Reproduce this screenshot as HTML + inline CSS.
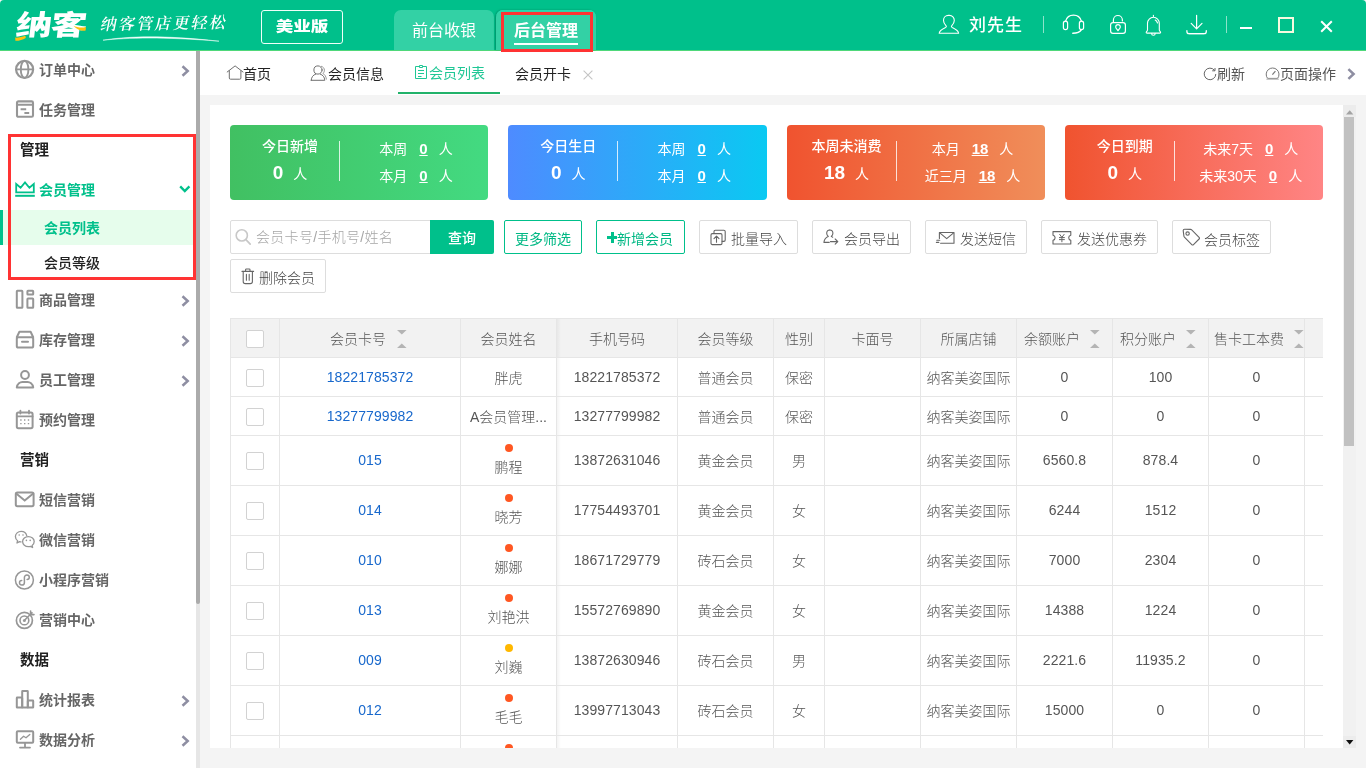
<!DOCTYPE html>
<html lang="zh-CN"><head><meta charset="utf-8"><title>会员列表</title>
<style>
*{box-sizing:border-box;margin:0;padding:0}
html,body{width:1366px;height:768px;overflow:hidden}
body{position:relative;background:#f4f4f4;font-family:"Liberation Sans","Noto Sans CJK SC",sans-serif;font-size:14px;color:#666}
#wrap{position:absolute;left:0;top:0;width:1366px;height:768px;will-change:transform}
.a{position:absolute}
.t{position:absolute;white-space:nowrap;line-height:20px;height:20px}
.c{text-align:center}
svg{position:absolute;overflow:visible}
.ic{fill:none;stroke:#969696;stroke-width:2;stroke-linecap:round;stroke-linejoin:round}
.hi{fill:none;stroke:#fff;stroke-width:1.2;stroke-linecap:round;stroke-linejoin:round}
.ti{fill:none;stroke:#707070;stroke-width:1;stroke-linecap:round;stroke-linejoin:round}
.bi{fill:none;stroke:#666;stroke-width:1.1;stroke-linecap:round;stroke-linejoin:round}
#hd{left:0;top:0;width:1366px;height:50px;background:#00c08b;border-radius:4px 4px 0 0}
#hdl{left:0;top:50px;width:1366px;height:1px;background:#4fd87a}
.logo{font-family:"Liberation Sans","Noto Sans CJK SC",sans-serif;font-weight:900;color:#fff;font-size:28px;line-height:34px;height:34px;letter-spacing:-1px;transform:skewX(-7deg) scaleX(1.29);transform-origin:left bottom;white-space:nowrap}
.slog{font-family:"Liberation Serif","Noto Serif CJK SC","Noto Sans CJK SC",serif;font-weight:600;color:#fff;font-size:16px;letter-spacing:2.1px;transform:skewX(-12deg) rotate(-1deg)}
.ver{left:261px;top:10px;width:82px;height:34px;border:1px solid #effff9;border-radius:3px;color:#fff;font-weight:900;font-size:14px;line-height:31px;text-align:center}
.ver span{display:inline-block;transform:scaleX(1.25)}
.tab{top:10px;height:40px;padding-top:1px;background:#33d1a5;border-radius:7px 7px 0 0;color:#fff;font-size:16px;text-align:center;line-height:40px}
.red{border:3px solid #ff3333;z-index:5}
.mi{position:absolute;left:39px;font-weight:700;color:#666;font-size:14px;line-height:20px;height:20px;white-space:nowrap}
.mh{position:absolute;left:20px;font-weight:700;color:#222;font-size:14.5px;line-height:20px;height:20px;white-space:nowrap}
.ptab{position:absolute;top:64px;height:20px;line-height:20px;font-size:14px;color:#222;white-space:nowrap}
.card{position:absolute;top:125px;width:258.25px;height:75px;border-radius:4px;color:#fff}
.card .t{color:#fff}
.card b{font-weight:700}
.u{text-decoration:underline;font-weight:700;font-size:15px}
.btn{position:absolute;top:220px;height:34px;border:1px solid #ddd;border-radius:2px;background:#fff}
.btn.g{border-color:#00c08b}
.cb{position:absolute;left:246px;width:18px;height:18px;border:1px solid #d2d2d2;border-radius:2px;background:#fff}
.vl{position:absolute;top:319px;width:1px;height:429px;background:#e6e6e6}
.hl{position:absolute;left:230px;width:1093px;height:1px;background:#e6e6e6}
.td{position:absolute;white-space:nowrap;line-height:20px;height:20px;text-align:center;color:#555;font-size:14px;font-weight:300}
.lk{color:#1868cc}
.n{letter-spacing:.1px}
.dot{position:absolute;left:505px;width:8px;height:8px;border-radius:50%;background:#ff5722}
</style></head>
<body>
<div id="wrap">
<div class="a" id="hd"></div><div class="a" id="hdl"></div>
<div class="a logo" style="left:14px;top:9px">纳客</div>
<svg style="left:14px;top:24px" width="76" height="20" viewBox="0 0 76 20"><path d="M1.200 13.600C4.500 13.800 8 13 11.400 11.800L11.800 14C8.500 16 4.500 17 1.400 16.800z" fill="#ffc20e"/><path d="M59.400 1.800C63 3.400 67.500 4.200 72 3L71.600 6.600C67 7.400 63.400 5.600 59.400 1.800z" fill="#ffc20e"/></svg>
<div class="t slog" style="left:101px;top:14px">纳客管店更轻松</div>
<svg style="left:100px;top:34px" width="130" height="10"><path d="M3 6.200C28 2.300 62 .8 119 7.200 62 2.600 28 3.800 3 6.200z" fill="#f2fffa" stroke="#f2fffa" stroke-width=".5" stroke-linejoin="round"/></svg>
<div class="a ver"><span>美业版</span></div>
<div class="a tab" style="left:394px;width:100px">前台收银</div>
<div class="a tab" style="left:496px;width:100px;font-weight:700;box-shadow:-1px 0 2px rgba(0,110,80,.6),inset 0 1px 0 #22dcb0">后台管理</div>
<div class="a" style="left:514px;top:43px;width:64px;height:2px;background:#fff"></div>
<div class="a red" style="left:501px;top:12px;width:92px;height:40px"></div>
<svg style="left:0;top:0" width="1366" height="51" viewBox="0 0 1366 51"><path class="hi" d="M948.400 15.400c-2.900 0-4.900 2.300-4.900 5 0 2.300 1.300 4 2.600 5.400.5.600.3 1.200-.5 1.600-3 1.400-6 2.600-6.400 5.800h19.400c-.4-3.200-3.400-4.400-6.400-5.800-.8-.4-1-1-.5-1.600 1.300-1.400 2.600-3.100 2.600-5.400 0-2.700-2-5-4.900-5z" style="stroke-width:1.1"/><path class="hi" d="M1065.600 21.200a8.200 8.200 0 0 1 15.800 0"/><rect class="hi" x="1063.400" y="21.200" width="4.200" height="8.400" rx="2.100"/><rect class="hi" x="1079.400" y="21.200" width="4.200" height="8.400" rx="2.100"/><path class="hi" d="M1081.400 29.600c-1.400 2.400-4.400 3.600-8.600 3.600" style="stroke-width:1.5"/><rect class="hi" x="1110.600" y="22.600" width="14.800" height="10.800" rx="2.400"/><path class="hi" d="M1113.400 22.400v-2.400a4.500 4.500 0 0 1 9 0v1"/><path class="hi" d="M1118 24.600a2.300 2.300 0 0 1 2.300 2.300c0 1.400-1.400 2.400-2.300 3.800-.9-1.400-2.300-2.400-2.300-3.800a2.300 2.300 0 0 1 2.300-2.300z"/><path class="hi" d="M1153.400 15.200v1.400M1147.500 30v-6.800a5.900 5.900 0 0 1 11.800 0v6.800c0 .9 1 1.500 1.200 2.100.2.600-.2 1-.8 1h-12.600c-.6 0-1-.4-.8-1 .2-.6 1.200-1.200 1.200-2.100zM1151.600 33.400a1.800 1.800 0 0 0 3.600 0M1155.200 20c1.200.7 1.900 1.800 2.300 3" style="stroke-width:1.1"/><path class="hi" d="M1196.600 15.300v13.300M1191.200 23.400l5.400 5.400 5.400-5.400" style="stroke-width:1.2"/><path class="hi" d="M1186.900 30.600v.8c0 1.300.9 2.200 2.200 2.200h15c1.300 0 2.200-.9 2.200-2.200v-.8" style="stroke-width:1.300"/><path d="M1189 33.900h15.200" stroke="rgba(255,255,255,.45)" stroke-width="1.200"/></svg>
<div class="t" style="left:969px;top:13px;font-size:17px;letter-spacing:1px;font-weight:500;color:#fff;line-height:26px;height:26px">刘先生</div>
<div class="a" style="left:1043px;top:16px;width:1px;height:17px;background:rgba(255,255,255,.55)"></div>
<div class="a" style="left:1226px;top:16px;width:1px;height:17px;background:rgba(255,255,255,.55)"></div>
<div class="a" style="left:1240px;top:27px;width:12px;height:2px;background:#fff"></div>
<div class="a" style="left:1278px;top:17px;width:16px;height:16px;border:2px solid #f6fadf"></div>
<svg style="left:1320px;top:20px" width="13" height="13" viewBox="0 0 13 13"><path d="M1.200 1.200l10.600 10.600M11.800 1.200L1.200 11.800" stroke="#fff" stroke-width="2" fill="none"/></svg>
<div class="a" style="left:0;top:51px;width:196px;height:717px;background:#fff"></div>
<div class="a" style="left:196px;top:51px;width:4px;height:717px;background:#e6e6e6"></div>
<div class="a" style="left:196px;top:51px;width:4px;height:553px;background:#ababab;border-radius:0 0 2px 2px"></div>
<div class="a" style="left:0;top:210px;width:196px;height:35px;background:#e6fdec"></div>
<div class="a" style="left:0;top:210px;width:3px;height:35px;background:#00c08b"></div>
<svg style="left:14px;top:59px" width="22" height="22" viewBox="0 0 22 22"><circle class="ic" cx="10.600" cy="10.400" r="8.500" style="stroke-width:2.2"/><ellipse class="ic" cx="10.600" cy="10.400" rx="3.800" ry="8.500" style="stroke-width:1.9"/><path class="ic" d="M2.200 10.400h16.800" style="stroke-width:1.900"/></svg><div class="mi" style="top:60px">订单中心</div>
<svg style="left:181px;top:65px" width="9" height="12" viewBox="0 0 9 12"><path d="M1.500 1.300L6.700 6 1.500 10.700" fill="none" stroke="#8e8ea2" stroke-width="2.500"/></svg>
<svg style="left:14px;top:99px" width="22" height="22" viewBox="0 0 22 22"><rect class="ic" x="3" y="2.400" width="16" height="15.400" rx="1.400" style="stroke-width:2.1"/><path class="ic" d="M3 5.800h16M6.600 10.200h5.600M10.400 14h4.800" style="stroke-width:1.900;stroke-linecap:butt"/></svg><div class="mi" style="top:100px">任务管理</div>
<div class="mh" style="top:140px">管理</div>
<svg style="left:14px;top:179px" width="22" height="22" viewBox="0 0 22 22"><path d="M2.200 13.400V5l4.400 3.800L11 3.400l4.400 5.400L19.800 5v8.400z" fill="none" stroke="#00c08b" stroke-width="1.800" stroke-linejoin="miter"/><path d="M1.200 16.800h19.600" stroke="#00c08b" stroke-width="2" fill="none"/></svg><div class="mi" style="top:180px;color:#00c08b">会员管理</div>
<svg style="left:179px;top:185px" width="12" height="9" viewBox="0 0 12 9"><path d="M1.200 1.400L5.800 6 10.400 1.400" fill="none" stroke="#00c08b" stroke-width="2.400"/></svg>
<div class="mi" style="left:44px;top:218px;color:#00c08b">会员列表</div>
<div class="mi" style="left:44px;top:253px;color:#222;font-weight:500">会员等级</div>
<svg style="left:14px;top:289px" width="22" height="22" viewBox="0 0 22 22"><rect class="ic" x="2.800" y="1.800" width="5.600" height="17" rx=".6"/><rect class="ic" x="13.400" y="1.800" width="5.800" height="3.800" rx=".6"/><rect class="ic" x="13.400" y="9.600" width="5.800" height="9.200" rx=".6"/></svg><div class="mi" style="top:290px">商品管理</div>
<svg style="left:181px;top:295px" width="9" height="12" viewBox="0 0 9 12"><path d="M1.500 1.300L6.700 6 1.500 10.700" fill="none" stroke="#8e8ea2" stroke-width="2.500"/></svg>
<svg style="left:14px;top:329px" width="22" height="22" viewBox="0 0 22 22"><path class="ic" d="M2.800 8.200l2.600-5.400h11.200l2.600 5.400"/><rect class="ic" x="2.800" y="8.200" width="16.400" height="10.400" rx="1.600"/><path class="ic" d="M8 12.800h6"/></svg><div class="mi" style="top:330px">库存管理</div>
<svg style="left:181px;top:335px" width="9" height="12" viewBox="0 0 9 12"><path d="M1.500 1.300L6.700 6 1.500 10.700" fill="none" stroke="#8e8ea2" stroke-width="2.500"/></svg>
<svg style="left:14px;top:369px" width="22" height="22" viewBox="0 0 22 22"><circle class="ic" cx="11" cy="6" r="3.900"/><path class="ic" d="M2.800 18.400c.6-3.600 3.400-5.400 5.600-5.400h5.200c2.200 0 5 1.800 5.600 5.400z"/></svg><div class="mi" style="top:370px">员工管理</div>
<svg style="left:181px;top:375px" width="9" height="12" viewBox="0 0 9 12"><path d="M1.500 1.300L6.700 6 1.500 10.700" fill="none" stroke="#8e8ea2" stroke-width="2.500"/></svg>
<svg style="left:14px;top:409px" width="22" height="22" viewBox="0 0 22 22"><rect class="ic" x="2.800" y="3.600" width="15.800" height="15.600" rx="1.600"/><path class="ic" d="M2.800 7.400h15.800M6.400 1.600v3M15 1.600v3" style="stroke-width:1.8"/><path d="M6.200 11h1.400M10 11h1.400M13.800 11h1.400M6.200 14.600h1.400M10 14.600h1.400M13.800 14.600h1.400" stroke="#999" stroke-width="1.400" fill="none"/></svg><div class="mi" style="top:410px">预约管理</div>
<div class="mh" style="top:450px">营销</div>
<svg style="left:14px;top:489px" width="22" height="22" viewBox="0 0 22 22"><rect class="ic" x="1.800" y="3.600" width="17.800" height="13.600" rx="1.600"/><path class="ic" d="M2.200 4.600l8.500 7 8.500-7"/></svg><div class="mi" style="top:490px">短信营销</div>
<svg style="left:14px;top:529px" width="22" height="22" viewBox="0 0 22 22"><path class="ic" d="M12.800 6.800C12.200 4.200 10 2.400 7.200 2.400 4 2.400 1.400 4.600 1.400 7.600c0 1.700.9 3.200 2.200 4.100l-.6 2.300 2.500-1.300c.5.100 1 .2 1.500.2" style="stroke-width:1.3"/><path class="ic" d="M14.400 7.600c3.200 0 5.800 2.200 5.800 5 0 1.600-.8 3-2.100 3.900l.5 2-2.200-1.100c-.6.200-1.300.2-2 .2-3.200 0-5.800-2.200-5.800-5s2.600-5 5.800-5z" style="stroke-width:1.300"/><circle cx="5.200" cy="6" r=".8" fill="#999"/><circle cx="9" cy="6" r=".8" fill="#999"/><circle cx="12.400" cy="11.400" r=".8" fill="#999"/><circle cx="16.200" cy="11.400" r=".8" fill="#999"/></svg><div class="mi" style="top:530px">微信营销</div>
<svg style="left:14px;top:569px" width="22" height="22" viewBox="0 0 22 22"><circle class="ic" cx="10.400" cy="11" r="9" style="stroke-width:1.500"/><path class="ic" d="M10.400 13.400V8.600c0-1.600 1.200-2.600 2.500-2.600s2.400 1 2.400 2.300c0 1.400-1 2.100-2.200 2.100M10.400 8.600v4.800c0 1.600-1.200 2.600-2.500 2.600s-2.400-1-2.400-2.300c0-1.400 1-2.100 2.200-2.100" style="stroke-width:1.500"/></svg><div class="mi" style="top:570px">小程序营销</div>
<svg style="left:14px;top:609px" width="22" height="22" viewBox="0 0 22 22"><circle class="ic" cx="10.400" cy="11.400" r="8" style="stroke-width:1.700"/><circle class="ic" cx="10.400" cy="11.400" r="4.400" style="stroke-width:1.600"/><circle cx="10.400" cy="11.400" r="1.500" fill="#999"/><path class="ic" d="M11 10.800l7-7M16.600 2v3.600h3.400" style="stroke-width:1.600"/></svg><div class="mi" style="top:610px">营销中心</div>
<div class="mh" style="top:650px">数据</div>
<svg style="left:14px;top:689px" width="22" height="22" viewBox="0 0 22 22"><rect class="ic" x="2.800" y="8.600" width="5.400" height="10" rx=".4"/><rect class="ic" x="8.200" y="2" width="5.600" height="16.600" rx=".4"/><rect class="ic" x="13.800" y="11.600" width="5.400" height="7" rx=".4"/></svg><div class="mi" style="top:690px">统计报表</div>
<svg style="left:181px;top:695px" width="9" height="12" viewBox="0 0 9 12"><path d="M1.500 1.300L6.700 6 1.500 10.700" fill="none" stroke="#8e8ea2" stroke-width="2.500"/></svg>
<svg style="left:14px;top:729px" width="22" height="22" viewBox="0 0 22 22"><rect class="ic" x="2.800" y="2.200" width="16.400" height="11.600" rx="1"/><path class="ic" d="M11 13.800v4.400M6 18.600h10" style="stroke-width:1.800"/><path class="ic" d="M6.400 10.200l3.200-3 2.400 1.600 3.800-3.400" style="stroke-width:1.300"/></svg><div class="mi" style="top:730px">数据分析</div>
<svg style="left:181px;top:735px" width="9" height="12" viewBox="0 0 9 12"><path d="M1.500 1.300L6.700 6 1.500 10.700" fill="none" stroke="#8e8ea2" stroke-width="2.500"/></svg>
<div class="a" style="left:8px;top:134px;width:188px;height:146px;border:3px solid #ff3333"></div>
<div class="a" style="left:200px;top:51px;width:1166px;height:44px;background:#fff"></div>
<div class="a" style="left:398px;top:92px;width:102px;height:2px;background:#21b26a"></div>
<svg style="left:226px;top:65px" width="19" height="17" viewBox="0 0 19 17"><path class="ti" d="M1.200 7L9.100 .9 17 7M3.300 5.700v7.300c0 .8.400 1.200 1.200 1.200h9.200c.8 0 1.200-.4 1.200-1.200V5.700"/></svg><div class="ptab" style="left:243px">首页</div>
<svg style="left:310px;top:65px" width="18" height="17" viewBox="0 0 18 17"><circle class="ti" cx="8" cy="5" r="4.100"/><path class="ti" d="M1.200 15.300c.2-3.300 1.900-5.300 4.500-6.200M10.300 9.100c2.600.9 4.300 2.900 4.500 6.200H1.200"/><path class="ti" d="M11.400 1.300c1.800.5 3 2 3 3.900 0 1.400-.6 2.600-1.500 3.300 1.800.9 3.100 2.700 3.500 5.600" style="stroke:#999"/></svg><div class="ptab" style="left:328px">会员信息</div>
<svg style="left:413px;top:64px" width="16" height="17" viewBox="0 0 16 17"><path d="M6.500 2.500h-4v12h11v-12h-4M6.500 1.500h3v2h-3zM5 6.500h6M5 9.500h6M5 12.500h3.500" fill="none" stroke="#1fc795" stroke-width="1"/></svg><div class="ptab" style="left:429px;top:63px;color:#1fc795">会员列表</div>
<div class="ptab" style="left:515px">会员开卡</div>
<svg style="left:583px;top:70px" width="10" height="10" viewBox="0 0 10 10"><path d="M.600 .600l8.800 8.800M9.400 .600L.600 9.400" stroke="#c4c4c4" stroke-width="1.100" fill="none"/></svg>
<svg style="left:1203px;top:67px" width="14" height="14" viewBox="0 0 14 14"><path d="M11.600 3.400A5.800 5.800 0 1 0 12.800 7" fill="none" stroke="#666" stroke-width="1"/><path d="M9.200 3.800h2.800V1" fill="none" stroke="#666" stroke-width="1"/></svg><div class="ptab" style="left:1217px;color:#555">刷新</div>
<svg style="left:1265px;top:66px" width="15" height="14" viewBox="0 0 15 14"><path d="M2.600 12.400A6.400 6.400 0 1 1 12.600 12.400z" fill="none" stroke="#777" stroke-width="1"/><path d="M7.400 8.600l3-3.400" fill="none" stroke="#777" stroke-width="1.200"/><path d="M1.400 13.200h12.400" stroke="#bbb" stroke-width="1.200"/></svg><div class="ptab" style="left:1280px;color:#555">页面操作</div>
<svg style="left:1347px;top:68px" width="9" height="12" viewBox="0 0 9 12"><path d="M1.400 1.200L6.600 6 1.400 10.800" fill="none" stroke="#8e8ea2" stroke-width="2.500"/></svg>
<div class="a" style="left:210px;top:105px;width:1133px;height:643px;background:#fff"></div>
<div class="a" style="left:1343px;top:105px;width:13px;height:643px;background:#f1f1f1"></div>
<div class="a" style="left:1343px;top:105px;width:13px;height:12px;background:#ececec"></div>
<div class="a" style="left:1343px;top:736px;width:13px;height:12px;background:#ececec"></div>
<div class="a" style="left:1344px;top:117px;width:10px;height:329px;background:#c1c1c1"></div>
<svg style="left:1346px;top:110px" width="8" height="5" viewBox="0 0 8 5"><path d="M0 4.500L3.700 .200 7.400 4.500z" fill="#a3a3a3"/></svg><svg style="left:1346px;top:740px" width="8" height="5" viewBox="0 0 8 5"><path d="M0 0h7.400L3.700 4.400z" fill="#111"/></svg>
<div class="card" style="left:230px;background:linear-gradient(90deg,#41c062,#43da81)"><div class="t c" style="left:0;width:120px;top:11px;font-weight:500">今日新增</div><div class="t c" style="left:0;width:120px;top:36px;line-height:24px;height:24px"><b style="font-size:19px">0</b><span style="padding-left:10px">人</span></div><div class="a" style="left:109px;top:16px;width:1px;height:40px;background:rgba(255,255,255,.8)"></div><div class="t c" style="left:112px;width:148px;top:14px">本周<span class="u" style="margin:0 11px 0 12px">0</span>人</div><div class="t c" style="left:112px;width:148px;top:41px">本月<span class="u" style="margin:0 11px 0 12px">0</span>人</div></div>
<div class="card" style="left:508.25px;background:linear-gradient(90deg,#4e8bff,#0ac9f2)"><div class="t c" style="left:0;width:120px;top:11px;font-weight:500">今日生日</div><div class="t c" style="left:0;width:120px;top:36px;line-height:24px;height:24px"><b style="font-size:19px">0</b><span style="padding-left:10px">人</span></div><div class="a" style="left:109px;top:16px;width:1px;height:40px;background:rgba(255,255,255,.8)"></div><div class="t c" style="left:112px;width:148px;top:14px">本周<span class="u" style="margin:0 11px 0 12px">0</span>人</div><div class="t c" style="left:112px;width:148px;top:41px">本月<span class="u" style="margin:0 11px 0 12px">0</span>人</div></div>
<div class="card" style="left:786.5px;background:linear-gradient(90deg,#f0532f,#f08e5a)"><div class="t c" style="left:0;width:120px;top:11px;font-weight:500">本周未消费</div><div class="t c" style="left:0;width:120px;top:36px;line-height:24px;height:24px"><b style="font-size:19px">18</b><span style="padding-left:10px">人</span></div><div class="a" style="left:109px;top:16px;width:1px;height:40px;background:rgba(255,255,255,.8)"></div><div class="t c" style="left:112px;width:148px;top:14px">本月<span class="u" style="margin:0 11px 0 12px">18</span>人</div><div class="t c" style="left:112px;width:148px;top:41px">近三月<span class="u" style="margin:0 11px 0 12px">18</span>人</div></div>
<div class="card" style="left:1064.75px;background:linear-gradient(90deg,#f0532f,#ff8585)"><div class="t c" style="left:0;width:120px;top:11px;font-weight:500">今日到期</div><div class="t c" style="left:0;width:120px;top:36px;line-height:24px;height:24px"><b style="font-size:19px">0</b><span style="padding-left:10px">人</span></div><div class="a" style="left:109px;top:16px;width:1px;height:40px;background:rgba(255,255,255,.8)"></div><div class="t c" style="left:112px;width:148px;top:14px">未来7天<span class="u" style="margin:0 11px 0 12px">0</span>人</div><div class="t c" style="left:112px;width:148px;top:41px">未来30天<span class="u" style="margin:0 11px 0 12px">0</span>人</div></div>
<div class="btn" style="left:230px;width:201px;border-radius:2px 0 0 2px"></div><svg style="left:235px;top:229px" width="17" height="17" viewBox="0 0 17 17"><circle cx="6.800" cy="6.400" r="5.600" fill="none" stroke="#c8c8c8" stroke-width="1.600"/><path d="M10.900 10.600l4.300 4.500" stroke="#c8c8c8" stroke-width="1.700" stroke-linecap="round"/></svg><div class="t" style="left:256px;top:227px;color:#a6a6a6;letter-spacing:.3px;font-weight:300">会员卡号/手机号/姓名</div>
<div class="a" style="left:430px;top:220px;width:64px;height:34px;background:#00c08b;border-radius:0 2px 2px 0;color:#fff;font-weight:500;text-align:center;line-height:35px;padding-top:1px">查询</div>
<div class="btn g" style="left:504px;width:78px"></div><div class="t c" style="left:504px;width:78px;top:229px;color:#00b884">更多筛选</div>
<div class="btn g" style="left:596px;width:89px"></div><div class="a" style="left:607px;top:236px;width:10px;height:3px;background:#00c08b"></div><div class="a" style="left:610.5px;top:232px;width:3px;height:11px;background:#00c08b"></div><div class="t" style="left:617px;top:229px;color:#00b884">新增会员</div>
<div class="btn" style="left:699px;width:99px;top:220px"></div><svg style="left:709.5px;top:229px" width="20" height="18" viewBox="0 0 20 18"><rect class="bi" x="1" y="4.600" width="11" height="11" rx="1.300"/><path class="bi" d="M4 4.400V2.500c0-.8.500-1.300 1.300-1.300h8.600c.8 0 1.300.5 1.300 1.300v8.600c0 .8-.5 1.300-1.300 1.300h-1.700M6.500 13.200V7.400M4 9.600l2.500-2.400 2.500 2.400"/></svg><div class="t" style="left:731px;top:229px;color:#444;font-weight:300">批量导入</div>
<div class="btn" style="left:812px;width:99px;top:220px"></div><svg style="left:823px;top:229px" width="20" height="18" viewBox="0 0 20 18"><path class="bi" d="M6.800 1c-1.900 0-3.100 1.400-3.100 3.300 0 1.300.6 2.500 1.600 3.200C3.200 8.300 1.300 9.800.9 13.400h5.300"/><path class="bi" d="M6.800 1c1.900 0 3.100 1.400 3.100 3.300 0 1.300-.6 2.500-1.600 3.200.5.200 1 .400 1.400.700"/><path class="bi" d="M7.400 12.600h7.200M12.200 10l2.600 2.600-2.600 2.600"/></svg><div class="t" style="left:844px;top:229px;color:#444;font-weight:300">会员导出</div>
<div class="btn" style="left:925px;width:102px;top:220px"></div><svg style="left:936px;top:230px" width="20" height="18" viewBox="0 0 20 18"><path class="bi" d="M3.400 8.400V2.500h14.600v10.800H4.600"/><path class="bi" d="M3.800 2.900l6.900 5.700 6.900-5.700M.8 10.200h3M.4 12.400h2.400"/></svg><div class="t" style="left:960px;top:229px;color:#444;font-weight:300">发送短信</div>
<div class="btn" style="left:1041px;width:117px;top:220px"></div><svg style="left:1052px;top:230px" width="20" height="18" viewBox="0 0 20 18"><path class="bi" d="M1 1.600h17.800v3.600c-1.400.3-2.100 1.200-2.100 2.600s.7 2.300 2.100 2.600v3.600H1v-3.600c1.400-.3 2.100-1.200 2.100-2.600S2.400 5.500 1 5.200z"/><path class="bi" d="M7.700 4.400l2.200 3 2.200-3M7.400 7.600h5M7.400 9.600h5M9.900 7.400v4.400" style="stroke-width:1"/></svg><div class="t" style="left:1077px;top:229px;color:#444;font-weight:300">发送优惠券</div>
<div class="btn" style="left:1172px;width:99px;top:220px"></div><svg style="left:1182px;top:228px" width="20" height="18" viewBox="0 0 20 18"><path class="bi" d="M1.200 2.600c0-.8.500-1.300 1.300-1.300l6 .1c.5 0 .9.200 1.200.5l7.400 7.400c.5.500.5 1.200 0 1.700l-5.600 5.600c-.5.500-1.200.5-1.700 0L2.400 9.200c-.3-.3-.5-.7-.5-1.200z"/><circle class="bi" cx="5.600" cy="5.600" r="1.700"/></svg><div class="t" style="left:1204px;top:230px;color:#444;font-weight:300">会员标签</div>
<div class="btn" style="left:230px;width:96px;top:259px"></div><svg style="left:241px;top:267.5px" width="20" height="18" viewBox="0 0 20 18"><path class="bi" d="M1 3.400h11.600M4.600 3.200V1.800c0-.5.300-.8.800-.8h2.800c.5 0 .8.300.8.800v1.400M2.200 3.600v9.800c0 1.300.8 2.200 2.200 2.200h4.800c1.400 0 2.200-.9 2.200-2.200V3.600M5.400 6.400v5.800M8.200 6.400v5.800"/></svg><div class="t" style="left:259px;top:268px;color:#444;font-weight:300">删除会员</div>
<div class="a" style="left:230px;top:318px;width:1093px;height:430px;overflow:hidden">
<div class="a" style="left:0;top:0;width:1093px;height:40px;background:#f2f2f2"></div>
</div>
<div class="hl" style="top:318px"></div><div class="vl" style="left:230px;top:318px;height:430px"></div>
<div class="vl" style="left:279px"></div><div class="vl" style="left:460px"></div><div class="vl" style="left:556px"></div><div class="vl" style="left:677px"></div><div class="vl" style="left:773px"></div><div class="vl" style="left:824px"></div><div class="vl" style="left:920px"></div><div class="vl" style="left:1016px"></div><div class="vl" style="left:1112px"></div><div class="vl" style="left:1208px"></div><div class="vl" style="left:1304px"></div>
<div class="a" style="left:557px;top:319px;width:4px;height:429px;background:linear-gradient(90deg,rgba(0,0,0,.045),rgba(0,0,0,0))"></div>
<div class="hl" style="top:357px"></div><div class="hl" style="top:396px"></div><div class="hl" style="top:435px"></div><div class="hl" style="top:485px"></div><div class="hl" style="top:535px"></div><div class="hl" style="top:585px"></div><div class="hl" style="top:635px"></div><div class="hl" style="top:685px"></div><div class="hl" style="top:735px"></div>
<div class="cb" style="top:330px"></div><div class="td" style="left:330px;top:329px">会员卡号</div><svg style="left:396.8px;top:330px" width="10" height="18" viewBox="0 0 10 18"><path d="M0 0h9.600L4.800 4.600zM0 18h9.600L4.800 13.400z" fill="#b4b4b4"/></svg><div class="td " style="left:461px;width:95px;top:329px">会员姓名</div><div class="td " style="left:557px;width:120px;top:329px">手机号码</div><div class="td " style="left:678px;width:95px;top:329px">会员等级</div><div class="td " style="left:774px;width:50px;top:329px">性别</div><div class="td " style="left:825px;width:95px;top:329px">卡面号</div><div class="td " style="left:921px;width:95px;top:329px">所属店铺</div><div class="td" style="left:1024px;top:329px">余额账户</div><svg style="left:1090.2px;top:330px" width="10" height="18" viewBox="0 0 10 18"><path d="M0 0h9.600L4.800 4.600zM0 18h9.600L4.800 13.400z" fill="#b4b4b4"/></svg><div class="td" style="left:1120px;top:329px">积分账户</div><svg style="left:1186.2px;top:330px" width="10" height="18" viewBox="0 0 10 18"><path d="M0 0h9.600L4.800 4.600zM0 18h9.600L4.800 13.400z" fill="#b4b4b4"/></svg><div class="td" style="left:1214px;top:329px">售卡工本费</div><div class="a" style="left:1294px;top:330px;width:10px;height:18px;overflow:hidden"><svg style="left:0;top:0" width="10" height="18" viewBox="0 0 10 18"><path d="M0 0h9.600L4.800 4.600zM0 18h9.600L4.800 13.400z" fill="#b4b4b4"/></svg></div>
<div class="cb" style="top:369px"></div><div class="td lk n" style="left:280px;width:180px;top:367px">18221785372</div><div class="td " style="left:461px;width:95px;top:368px">胖虎</div><div class="td n" style="left:557px;width:120px;top:367px">18221785372</div><div class="td " style="left:678px;width:95px;top:368px">普通会员</div><div class="td " style="left:774px;width:50px;top:368px">保密</div><div class="td " style="left:921px;width:95px;top:368px">纳客美姿国际</div><div class="td n" style="left:1017px;width:95px;top:367px">0</div><div class="td n" style="left:1113px;width:95px;top:367px">100</div><div class="td n" style="left:1209px;width:95px;top:367px">0</div>
<div class="cb" style="top:408px"></div><div class="td lk n" style="left:280px;width:180px;top:406px">13277799982</div><div class="td " style="left:461px;width:95px;top:407px">A会员管理...</div><div class="td n" style="left:557px;width:120px;top:406px">13277799982</div><div class="td " style="left:678px;width:95px;top:407px">普通会员</div><div class="td " style="left:774px;width:50px;top:407px">保密</div><div class="td " style="left:921px;width:95px;top:407px">纳客美姿国际</div><div class="td n" style="left:1017px;width:95px;top:406px">0</div><div class="td n" style="left:1113px;width:95px;top:406px">0</div><div class="td n" style="left:1209px;width:95px;top:406px">0</div>
<div class="cb" style="top:452px"></div><div class="td lk n" style="left:280px;width:180px;top:450px">015</div><div class="dot" style="top:444px;background:#ff5722"></div><div class="td " style="left:461px;width:95px;top:457px">鹏程</div><div class="td n" style="left:557px;width:120px;top:450px">13872631046</div><div class="td " style="left:678px;width:95px;top:451px">黄金会员</div><div class="td " style="left:774px;width:50px;top:451px">男</div><div class="td " style="left:921px;width:95px;top:451px">纳客美姿国际</div><div class="td n" style="left:1017px;width:95px;top:450px">6560.8</div><div class="td n" style="left:1113px;width:95px;top:450px">878.4</div><div class="td n" style="left:1209px;width:95px;top:450px">0</div>
<div class="cb" style="top:502px"></div><div class="td lk n" style="left:280px;width:180px;top:500px">014</div><div class="dot" style="top:494px;background:#ff5722"></div><div class="td " style="left:461px;width:95px;top:507px">晓芳</div><div class="td n" style="left:557px;width:120px;top:500px">17754493701</div><div class="td " style="left:678px;width:95px;top:501px">黄金会员</div><div class="td " style="left:774px;width:50px;top:501px">女</div><div class="td " style="left:921px;width:95px;top:501px">纳客美姿国际</div><div class="td n" style="left:1017px;width:95px;top:500px">6244</div><div class="td n" style="left:1113px;width:95px;top:500px">1512</div><div class="td n" style="left:1209px;width:95px;top:500px">0</div>
<div class="cb" style="top:552px"></div><div class="td lk n" style="left:280px;width:180px;top:550px">010</div><div class="dot" style="top:544px;background:#ff5722"></div><div class="td " style="left:461px;width:95px;top:557px">娜娜</div><div class="td n" style="left:557px;width:120px;top:550px">18671729779</div><div class="td " style="left:678px;width:95px;top:551px">砖石会员</div><div class="td " style="left:774px;width:50px;top:551px">女</div><div class="td " style="left:921px;width:95px;top:551px">纳客美姿国际</div><div class="td n" style="left:1017px;width:95px;top:550px">7000</div><div class="td n" style="left:1113px;width:95px;top:550px">2304</div><div class="td n" style="left:1209px;width:95px;top:550px">0</div>
<div class="cb" style="top:602px"></div><div class="td lk n" style="left:280px;width:180px;top:600px">013</div><div class="dot" style="top:594px;background:#ff5722"></div><div class="td " style="left:461px;width:95px;top:607px">刘艳洪</div><div class="td n" style="left:557px;width:120px;top:600px">15572769890</div><div class="td " style="left:678px;width:95px;top:601px">黄金会员</div><div class="td " style="left:774px;width:50px;top:601px">女</div><div class="td " style="left:921px;width:95px;top:601px">纳客美姿国际</div><div class="td n" style="left:1017px;width:95px;top:600px">14388</div><div class="td n" style="left:1113px;width:95px;top:600px">1224</div><div class="td n" style="left:1209px;width:95px;top:600px">0</div>
<div class="cb" style="top:652px"></div><div class="td lk n" style="left:280px;width:180px;top:650px">009</div><div class="dot" style="top:644px;background:#ffb800"></div><div class="td " style="left:461px;width:95px;top:657px">刘巍</div><div class="td n" style="left:557px;width:120px;top:650px">13872630946</div><div class="td " style="left:678px;width:95px;top:651px">砖石会员</div><div class="td " style="left:774px;width:50px;top:651px">男</div><div class="td " style="left:921px;width:95px;top:651px">纳客美姿国际</div><div class="td n" style="left:1017px;width:95px;top:650px">2221.6</div><div class="td n" style="left:1113px;width:95px;top:650px">11935.2</div><div class="td n" style="left:1209px;width:95px;top:650px">0</div>
<div class="cb" style="top:702px"></div><div class="td lk n" style="left:280px;width:180px;top:700px">012</div><div class="dot" style="top:694px;background:#ff5722"></div><div class="td " style="left:461px;width:95px;top:707px">毛毛</div><div class="td n" style="left:557px;width:120px;top:700px">13997713043</div><div class="td " style="left:678px;width:95px;top:701px">砖石会员</div><div class="td " style="left:774px;width:50px;top:701px">女</div><div class="td " style="left:921px;width:95px;top:701px">纳客美姿国际</div><div class="td n" style="left:1017px;width:95px;top:700px">15000</div><div class="td n" style="left:1113px;width:95px;top:700px">0</div><div class="td n" style="left:1209px;width:95px;top:700px">0</div>
<div class="a" style="left:505px;top:744px;width:8px;height:4px;overflow:hidden"><div class="dot" style="left:0;top:0"></div></div>
<div class="a" style="left:200px;top:748px;width:1166px;height:20px;background:#f4f4f4"></div>
</div>
</body></html>
